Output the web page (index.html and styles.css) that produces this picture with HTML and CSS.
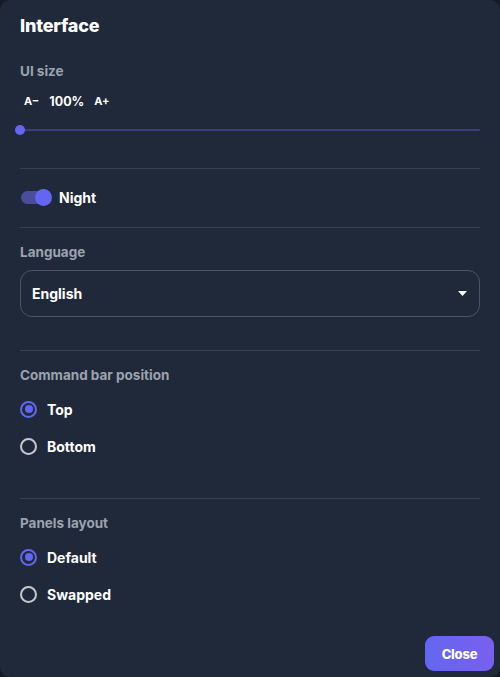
FILE: index.html
```html
<!DOCTYPE html>
<html lang="en">
<head>
<meta charset="utf-8">
<title>Interface</title>
<link rel="stylesheet" href="styles.css">
</head>
<body>
<div class="panel">
  <h1 class="title">Interface</h1>

  <div class="label label-first">UI size</div>
  <div class="size-row">
    <span class="size-btn">A−</span>
    <span class="size-value">100%</span>
    <span class="size-btn">A+</span>
  </div>
  <div class="slider">
    <div class="slider-track"></div>
    <div class="slider-thumb"></div>
  </div>

  <div class="divider divider-slider"></div>

  <div class="toggle-row">
    <span class="toggle"><span class="toggle-track"></span><span class="toggle-thumb"></span></span>
    <span class="option-text">Night</span>
  </div>

  <div class="divider divider-toggle"></div>

  <div class="label">Language</div>
  <div class="select">
    <span class="select-text">English</span>
    <svg class="caret" width="9" height="5" viewBox="0 0 9 5"><path d="M0 0h9L4.5 5z" fill="#ffffff"/></svg>
  </div>

  <div class="divider divider-select"></div>

  <div class="label">Command bar position</div>
  <div class="radio-row radio-first">
    <span class="radio checked"></span><span class="option-text">Top</span>
  </div>
  <div class="radio-row">
    <span class="radio"></span><span class="option-text">Bottom</span>
  </div>

  <div class="divider divider-radio"></div>

  <div class="label">Panels layout</div>
  <div class="radio-row radio-first">
    <span class="radio checked"></span><span class="option-text">Default</span>
  </div>
  <div class="radio-row">
    <span class="radio"></span><span class="option-text">Swapped</span>
  </div>

  <div class="footer">
    <button class="close-btn">Close</button>
  </div>
</div>
</body>
</html>
```

FILE: styles.css
```css
* { box-sizing: border-box; }

html, body {
  margin: 0;
  padding: 0;
  background: #151b26;
}

body {
  font-family: Inter, "Noto Sans", "Liberation Sans", sans-serif;
  color: #ffffff;
}

.panel {
  width: 500px;
  height: 677px;
  background: #1f2939;
  border-radius: 10px;
  padding: 14px 20px 0 20px;
  overflow: hidden;
}

.title {
  margin: 0;
  font-size: 18px;
  line-height: 24px;
  font-weight: 800;
  letter-spacing: -0.2px;
  color: #ffffff;
}

.label {
  margin-top: 15px;
  font-size: 13.5px;
  line-height: 18px;
  font-weight: 700;
  color: #9ca3af;
}

.label-first { margin-top: 24px; }

.size-row {
  margin-top: 13px;
  height: 16px;
  display: flex;
  align-items: center;
  font-size: 12px;
  font-weight: 700;
  color: #ffffff;
}

.size-btn {
  padding: 0 4px;
  font-size: 11px;
}

.size-value {
  margin: 0 6px;
  font-size: 12.5px;
}

.slider {
  margin-top: 16px;
  height: 10px;
  position: relative;
}

.slider-track {
  position: absolute;
  left: 0;
  right: 0;
  top: 4px;
  height: 2px;
  background: #3b3f78;
  border-radius: 1px;
}

.slider-thumb {
  position: absolute;
  left: -5px;
  top: 0;
  width: 10px;
  height: 10px;
  border-radius: 50%;
  background: #6366f1;
}

.divider {
  height: 1px;
  background: #374151;
}

.divider-slider { margin-top: 33px; }
.divider-toggle { margin-top: 20px; }
.divider-select { margin-top: 33px; }
.divider-radio { margin-top: 42px; }

.toggle-row {
  margin-top: 18px;
  height: 20px;
  display: flex;
  align-items: center;
}

.toggle {
  position: relative;
  width: 31px;
  height: 17px;
  margin-left: 1px;
  margin-right: 7px;
}

.toggle-track {
  position: absolute;
  left: 0;
  top: 2px;
  width: 28px;
  height: 13px;
  border-radius: 7px;
  background: #4a4c9c;
}

.toggle-thumb {
  position: absolute;
  right: 0;
  top: 0;
  width: 17px;
  height: 17px;
  border-radius: 50%;
  background: #6366f1;
}

.option-text {
  font-size: 14px;
  font-weight: 700;
  color: #ffffff;
}

.select {
  margin-top: 9px;
  height: 47px;
  border: 1px solid #4b5563;
  border-radius: 12px;
  display: flex;
  align-items: center;
  justify-content: space-between;
  padding: 0 12px 0 11px;
}

.select-text {
  font-size: 14px;
  font-weight: 700;
}

.caret { display: block; }

.radio-row {
  margin-top: 17px;
  height: 20px;
  display: flex;
  align-items: center;
}

.radio-first { margin-top: 15px; }

.radio {
  width: 17px;
  height: 17px;
  border-radius: 50%;
  border: 2px solid #c4c8cf;
  margin-right: 10px;
  display: flex;
  align-items: center;
  justify-content: center;
}

.radio.checked {
  border-color: #6366f1;
}

.radio.checked::after {
  content: "";
  width: 8px;
  height: 8px;
  border-radius: 50%;
  background: #6366f1;
}

.footer {
  margin-top: 32px;
  margin-right: -14px;
  display: flex;
  justify-content: flex-end;
}

.close-btn {
  width: 69px;
  height: 35px;
  border: none;
  border-radius: 9px;
  background: linear-gradient(90deg, #6366f1, #7a5ff0);
  color: #ffffff;
  font-family: Inter, "Noto Sans", "Liberation Sans", sans-serif;
  font-size: 13px;
  font-weight: 800;
  letter-spacing: -0.2px;
}
```
